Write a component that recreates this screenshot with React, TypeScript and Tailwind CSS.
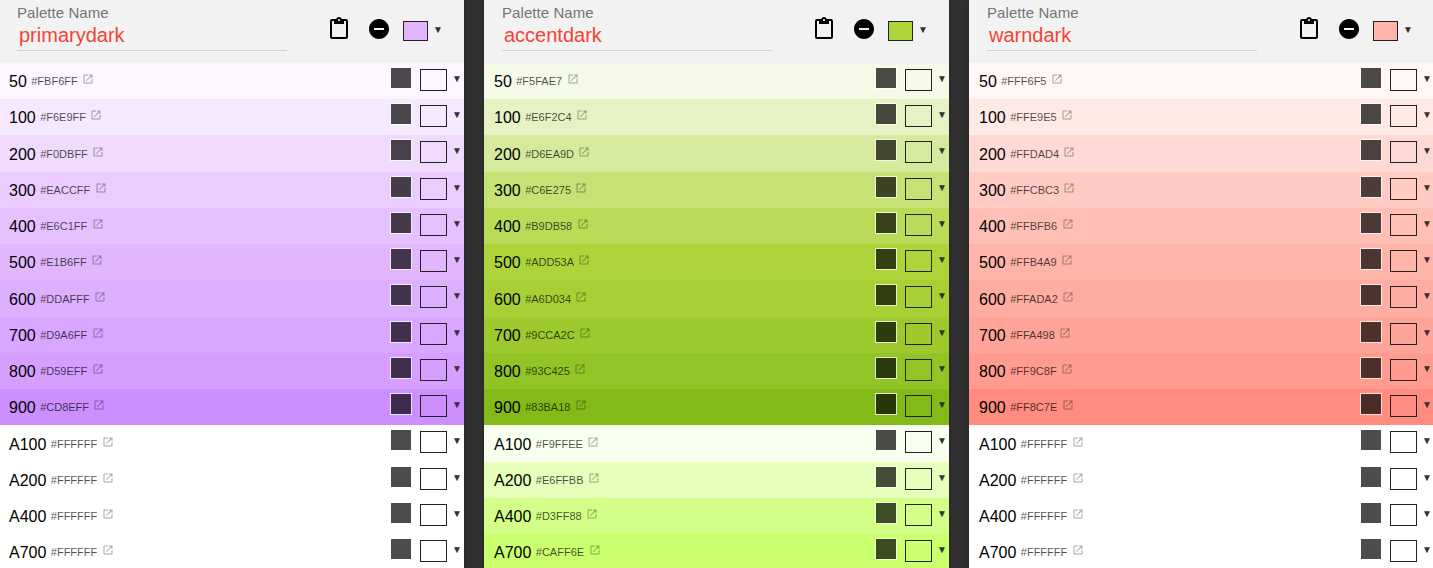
import React from "react";

type Shade = { name: string; hex: string };
type Palette = { name: string; color: string; hexes: string[] };

const shadeNames = ["50", "100", "200", "300", "400", "500", "600", "700", "800", "900", "A100", "A200", "A400", "A700"];

const palettes: Palette[] = [
  {
    name: "primarydark",
    color: "#E1B6FF",
    hexes: ["#FBF6FF", "#F6E9FF", "#F0DBFF", "#EACCFF", "#E6C1FF", "#E1B6FF", "#DDAFFF", "#D9A6FF", "#D59EFF", "#CD8EFF", "#FFFFFF", "#FFFFFF", "#FFFFFF", "#FFFFFF"],
  },
  {
    name: "accentdark",
    color: "#ADD53A",
    hexes: ["#F5FAE7", "#E6F2C4", "#D6EA9D", "#C6E275", "#B9DB58", "#ADD53A", "#A6D034", "#9CCA2C", "#93C425", "#83BA18", "#F9FFEE", "#E6FFBB", "#D3FF88", "#CAFF6E"],
  },
  {
    name: "warndark",
    color: "#FFB4A9",
    hexes: ["#FFF6F5", "#FFE9E5", "#FFDAD4", "#FFCBC3", "#FFBFB6", "#FFB4A9", "#FFADA2", "#FFA498", "#FF9C8F", "#FF8C7E", "#FFFFFF", "#FFFFFF", "#FFFFFF", "#FFFFFF"],
  },
];

function Icon({ d, className }: { d: string; className: string }) {
  return (
    <svg viewBox="0 0 24 24" fill="currentColor" className={className}>
      <path d={d} />
    </svg>
  );
}

const PASTE =
  "M19 2h-4.18C14.4.84 13.3 0 12 0c-1.3 0-2.4.84-2.82 2H5c-1.1 0-2 .9-2 2v16c0 1.1.9 2 2 2h14c1.1 0 2-.9 2-2V4c0-1.1-.9-2-2-2zm-7 0c.55 0 1 .45 1 1s-.45 1-1 1-1-.45-1-1 .45-1 1-1zm7 18H5V4h2v3h10V4h2v16z";
const REMOVE = "M12 2C6.48 2 2 6.48 2 12s4.48 10 10 10 10-4.48 10-10S17.52 2 12 2zm5 11H7v-2h10v2z";
const OPEN =
  "M19 19H5V5h7V3H5c-1.11 0-2 .9-2 2v14c0 1.1.89 2 2 2h14c1.1 0 2-.9 2-2v-7h-2v7zM14 3v2h3.59l-9.83 9.83 1.41 1.41L19 6.41V10h2V3h-7z";

function Header({ palette }: { palette: Palette }) {
  return (
    <header className="flex h-[63px] shrink-0 items-start bg-[#f2f2f2] pl-[18px]">
      <div className="flex h-[51px] w-[270px] flex-col border-b border-[#d2d2d2] pt-1">
        <span className="text-[15px] leading-[18px] tracking-[0.07px] text-[#757575]">Palette Name</span>
        <span className="pl-0.5 text-[20px] leading-[26px] text-[#f44336]">{palette.name}</span>
      </div>
      <Icon d={PASTE} className="mt-[17px] ml-10 size-6 text-black" />
      <Icon d={REMOVE} className="mt-[17px] ml-4 size-6 text-black" />
      <span className="mt-[21px] ml-3 h-5 w-[25px] border border-[#222]" style={{ backgroundColor: palette.color }} />
      <span className="mt-[22px] ml-[5px] text-[10px] leading-4 text-[#333]">▼</span>
    </header>
  );
}

function Row({ name, hex }: Shade) {
  return (
    <li className="flex h-[36.235px] shrink-0 items-start pl-[10px]" style={{ backgroundColor: hex }}>
      <div className="flex flex-1 items-start">
        <span className="pt-[7.2px] text-[16px] leading-6 text-black">{name}</span>
        <span className="ml-[4.45px] pt-[6.2px] text-[11px] leading-6 text-black/70">{hex}</span>
        <Icon d={OPEN} className="mt-[10.2px] ml-[4.42px] size-3 text-black/35" />
      </div>
      <span className="mt-1 size-[22px] border border-white/70 bg-black/70 bg-clip-padding" />
      <span className="mt-1.5 ml-2 h-[22px] w-[27px] border border-[#222]" />
      <span className="mt-2 ml-[5px] w-[12px] text-[10px] leading-4 text-[#333]">▼</span>
    </li>
  );
}

export default function App() {
  return (
    <main className="h-[568px] w-full overflow-hidden bg-[#303030] font-['Liberation_Sans',Arial,sans-serif]">
      <div className="-ml-px flex w-[1435px] gap-5">
        {palettes.map((palette) => (
          <section key={palette.name} className="flex h-[570px] w-[465px] shrink-0 flex-col shadow-[0_2px_4px_rgba(0,0,0,0.3)]">
            <Header palette={palette} />
            <ul className="flex flex-col">
              {shadeNames.map((name, i) => (
                <Row key={name} name={name} hex={palette.hexes[i]} />
              ))}
            </ul>
          </section>
        ))}
      </div>
    </main>
  );
}
